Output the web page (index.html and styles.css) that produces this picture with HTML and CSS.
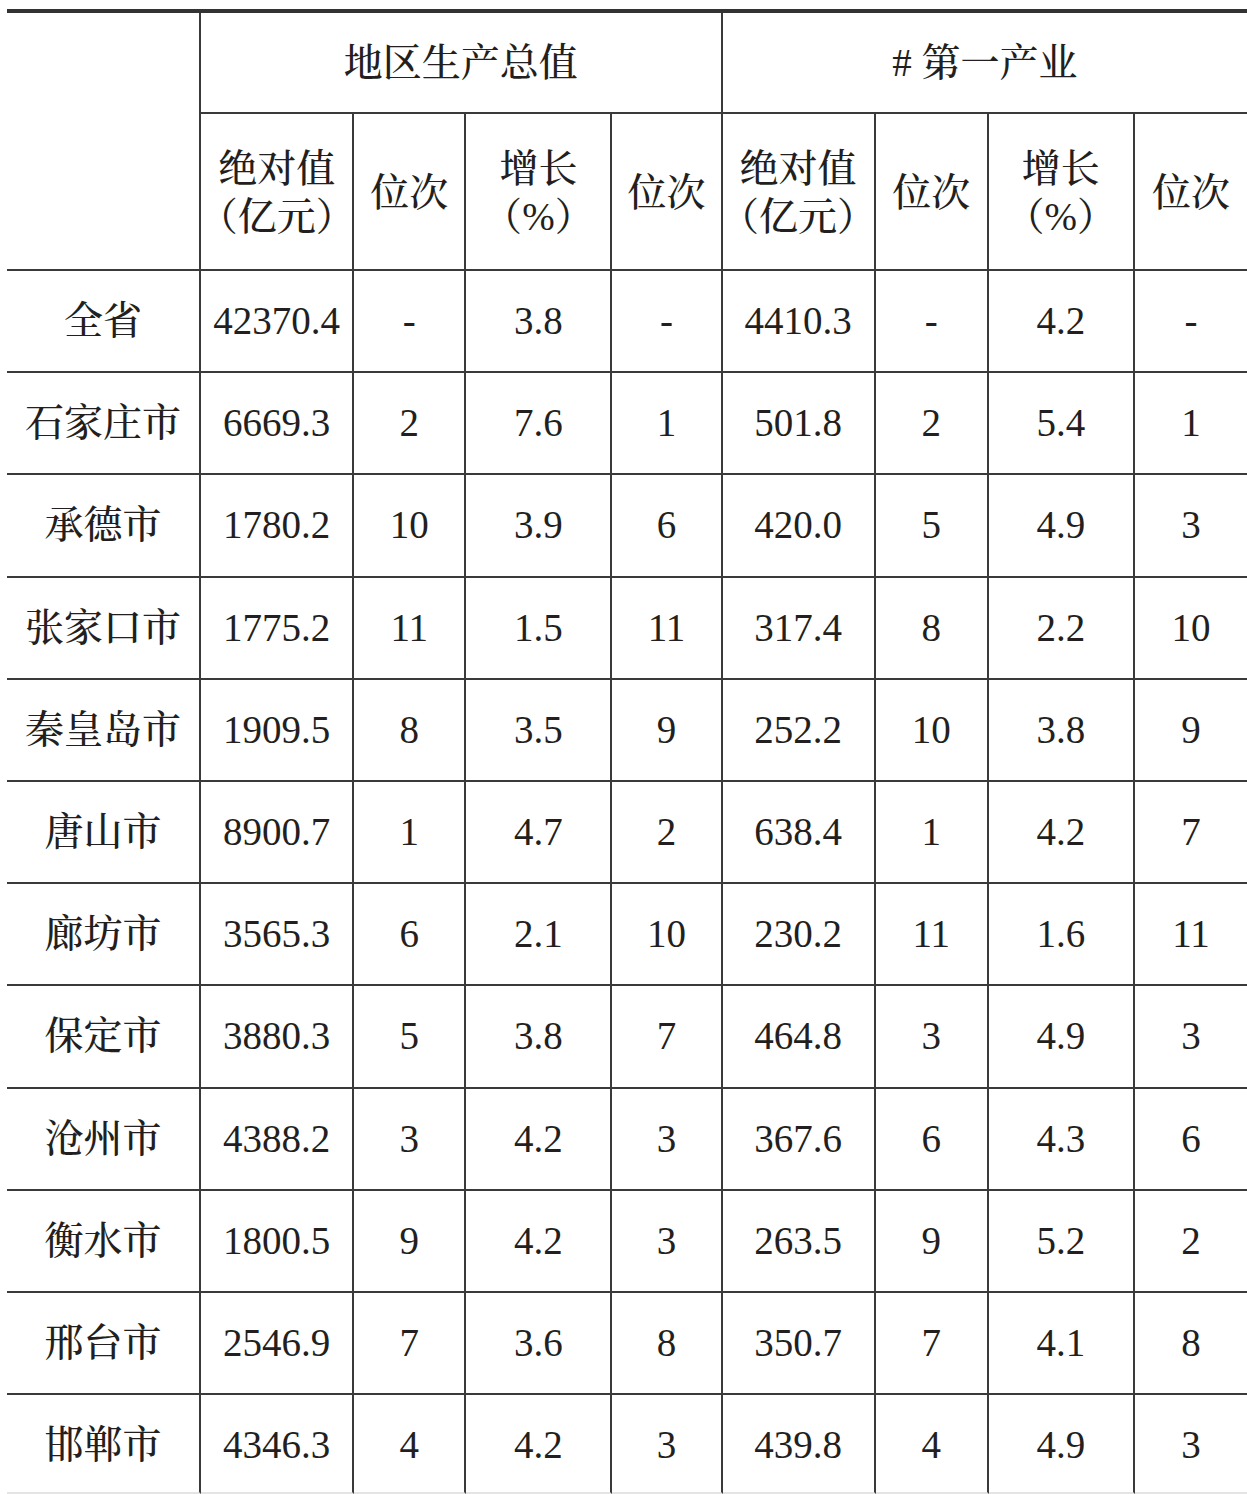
FILE: index.html
```html
<!DOCTYPE html>
<html lang="zh-CN">
<head>
<meta charset="utf-8">
<title>地区生产总值</title>
<link rel="stylesheet" href="styles.css">
</head>
<body>
<table class="stat">
  <colgroup>
    <col class="c-name">
    <col class="c-abs">
    <col class="c-rank">
    <col class="c-grow">
    <col class="c-rank2">
    <col class="c-abs">
    <col class="c-rank3">
    <col class="c-grow">
    <col class="c-last">
  </colgroup>
  <thead>
    <tr class="h1">
      <th rowspan="2" class="corner"></th>
      <th colspan="4">地区生产总值</th>
      <th colspan="4" class="end"><span class="lat">#</span> 第一产业</th>
    </tr>
    <tr class="h2">
      <th>绝对值<br><span class="paren">（</span>亿元<span class="paren">）</span></th>
      <th>位次</th>
      <th>增长<br><span class="paren">（</span><span class="lat">%</span><span class="paren">）</span></th>
      <th>位次</th>
      <th>绝对值<br><span class="paren">（</span>亿元<span class="paren">）</span></th>
      <th>位次</th>
      <th>增长<br><span class="paren">（</span><span class="lat">%</span><span class="paren">）</span></th>
      <th class="end">位次</th>
    </tr>
  </thead>
  <tbody>
    <tr><td class="name">全省</td><td>42370.4</td><td>-</td><td>3.8</td><td>-</td><td>4410.3</td><td>-</td><td>4.2</td><td class="end">-</td></tr>
    <tr><td class="name">石家庄市</td><td>6669.3</td><td>2</td><td>7.6</td><td>1</td><td>501.8</td><td>2</td><td>5.4</td><td class="end">1</td></tr>
    <tr><td class="name">承德市</td><td>1780.2</td><td>10</td><td>3.9</td><td>6</td><td>420.0</td><td>5</td><td>4.9</td><td class="end">3</td></tr>
    <tr><td class="name">张家口市</td><td>1775.2</td><td>11</td><td>1.5</td><td>11</td><td>317.4</td><td>8</td><td>2.2</td><td class="end">10</td></tr>
    <tr><td class="name">秦皇岛市</td><td>1909.5</td><td>8</td><td>3.5</td><td>9</td><td>252.2</td><td>10</td><td>3.8</td><td class="end">9</td></tr>
    <tr><td class="name">唐山市</td><td>8900.7</td><td>1</td><td>4.7</td><td>2</td><td>638.4</td><td>1</td><td>4.2</td><td class="end">7</td></tr>
    <tr><td class="name">廊坊市</td><td>3565.3</td><td>6</td><td>2.1</td><td>10</td><td>230.2</td><td>11</td><td>1.6</td><td class="end">11</td></tr>
    <tr><td class="name">保定市</td><td>3880.3</td><td>5</td><td>3.8</td><td>7</td><td>464.8</td><td>3</td><td>4.9</td><td class="end">3</td></tr>
    <tr><td class="name">沧州市</td><td>4388.2</td><td>3</td><td>4.2</td><td>3</td><td>367.6</td><td>6</td><td>4.3</td><td class="end">6</td></tr>
    <tr><td class="name">衡水市</td><td>1800.5</td><td>9</td><td>4.2</td><td>3</td><td>263.5</td><td>9</td><td>5.2</td><td class="end">2</td></tr>
    <tr><td class="name">邢台市</td><td>2546.9</td><td>7</td><td>3.6</td><td>8</td><td>350.7</td><td>7</td><td>4.1</td><td class="end">8</td></tr>
    <tr class="last"><td class="name">邯郸市</td><td>4346.3</td><td>4</td><td>4.2</td><td>3</td><td>439.8</td><td>4</td><td>4.9</td><td class="end">3</td></tr>
  </tbody>
</table>
</body>
</html>
```
FILE: styles.css
```css
html, body {
  margin: 0;
  padding: 0;
  background: #ffffff;
  overflow: hidden;
}

body {
  font-family: "Liberation Serif", "Noto Serif CJK SC", serif;
  color: #231f20;
}

.stat {
  margin: 9px 0 0 7px;
  width: 1240px;
  table-layout: fixed;
  border-collapse: separate;
  border-spacing: 0;
  border-top: 4px solid #333333;
  font-family: "Liberation Serif", "Noto Serif CJK SC", serif;
  font-size: 39px;
  line-height: 44px;
}

.c-name { width: 194px; }
.c-abs { width: 153px; }
.c-rank { width: 112px; }
.c-grow { width: 146px; }
.c-rank2 { width: 110px; }
.c-rank3 { width: 113px; }
.c-last { width: 112px; }

.stat th,
.stat td {
  box-sizing: border-box;
  padding: 0;
  text-align: center;
  vertical-align: middle;
  font-family: "Liberation Serif", "Noto Serif CJK SC", serif;
  font-size: 39px;
  font-weight: 500;
  color: #231f20;
  border-right: 2px solid #3a3a3a;
  border-bottom: 2px solid #3a3a3a;
  white-space: nowrap;
}

.stat .end {
  border-right: none;
}

.h1 th {
  height: 101px;
}

.h2 th {
  height: 157px;
  padding-top: 2px;
}

.stat tbody td {
  height: 102.2px;
}

.stat tbody tr.last td {
  height: 99px;
  padding-top: 3px;
  border-bottom-color: #e4e4e4;
}

.paren {
  font-family: "Noto Serif CJK SC", serif;
  font-feature-settings: "halt";
}

.lat {
  font-family: "Liberation Serif", serif;
}
```
